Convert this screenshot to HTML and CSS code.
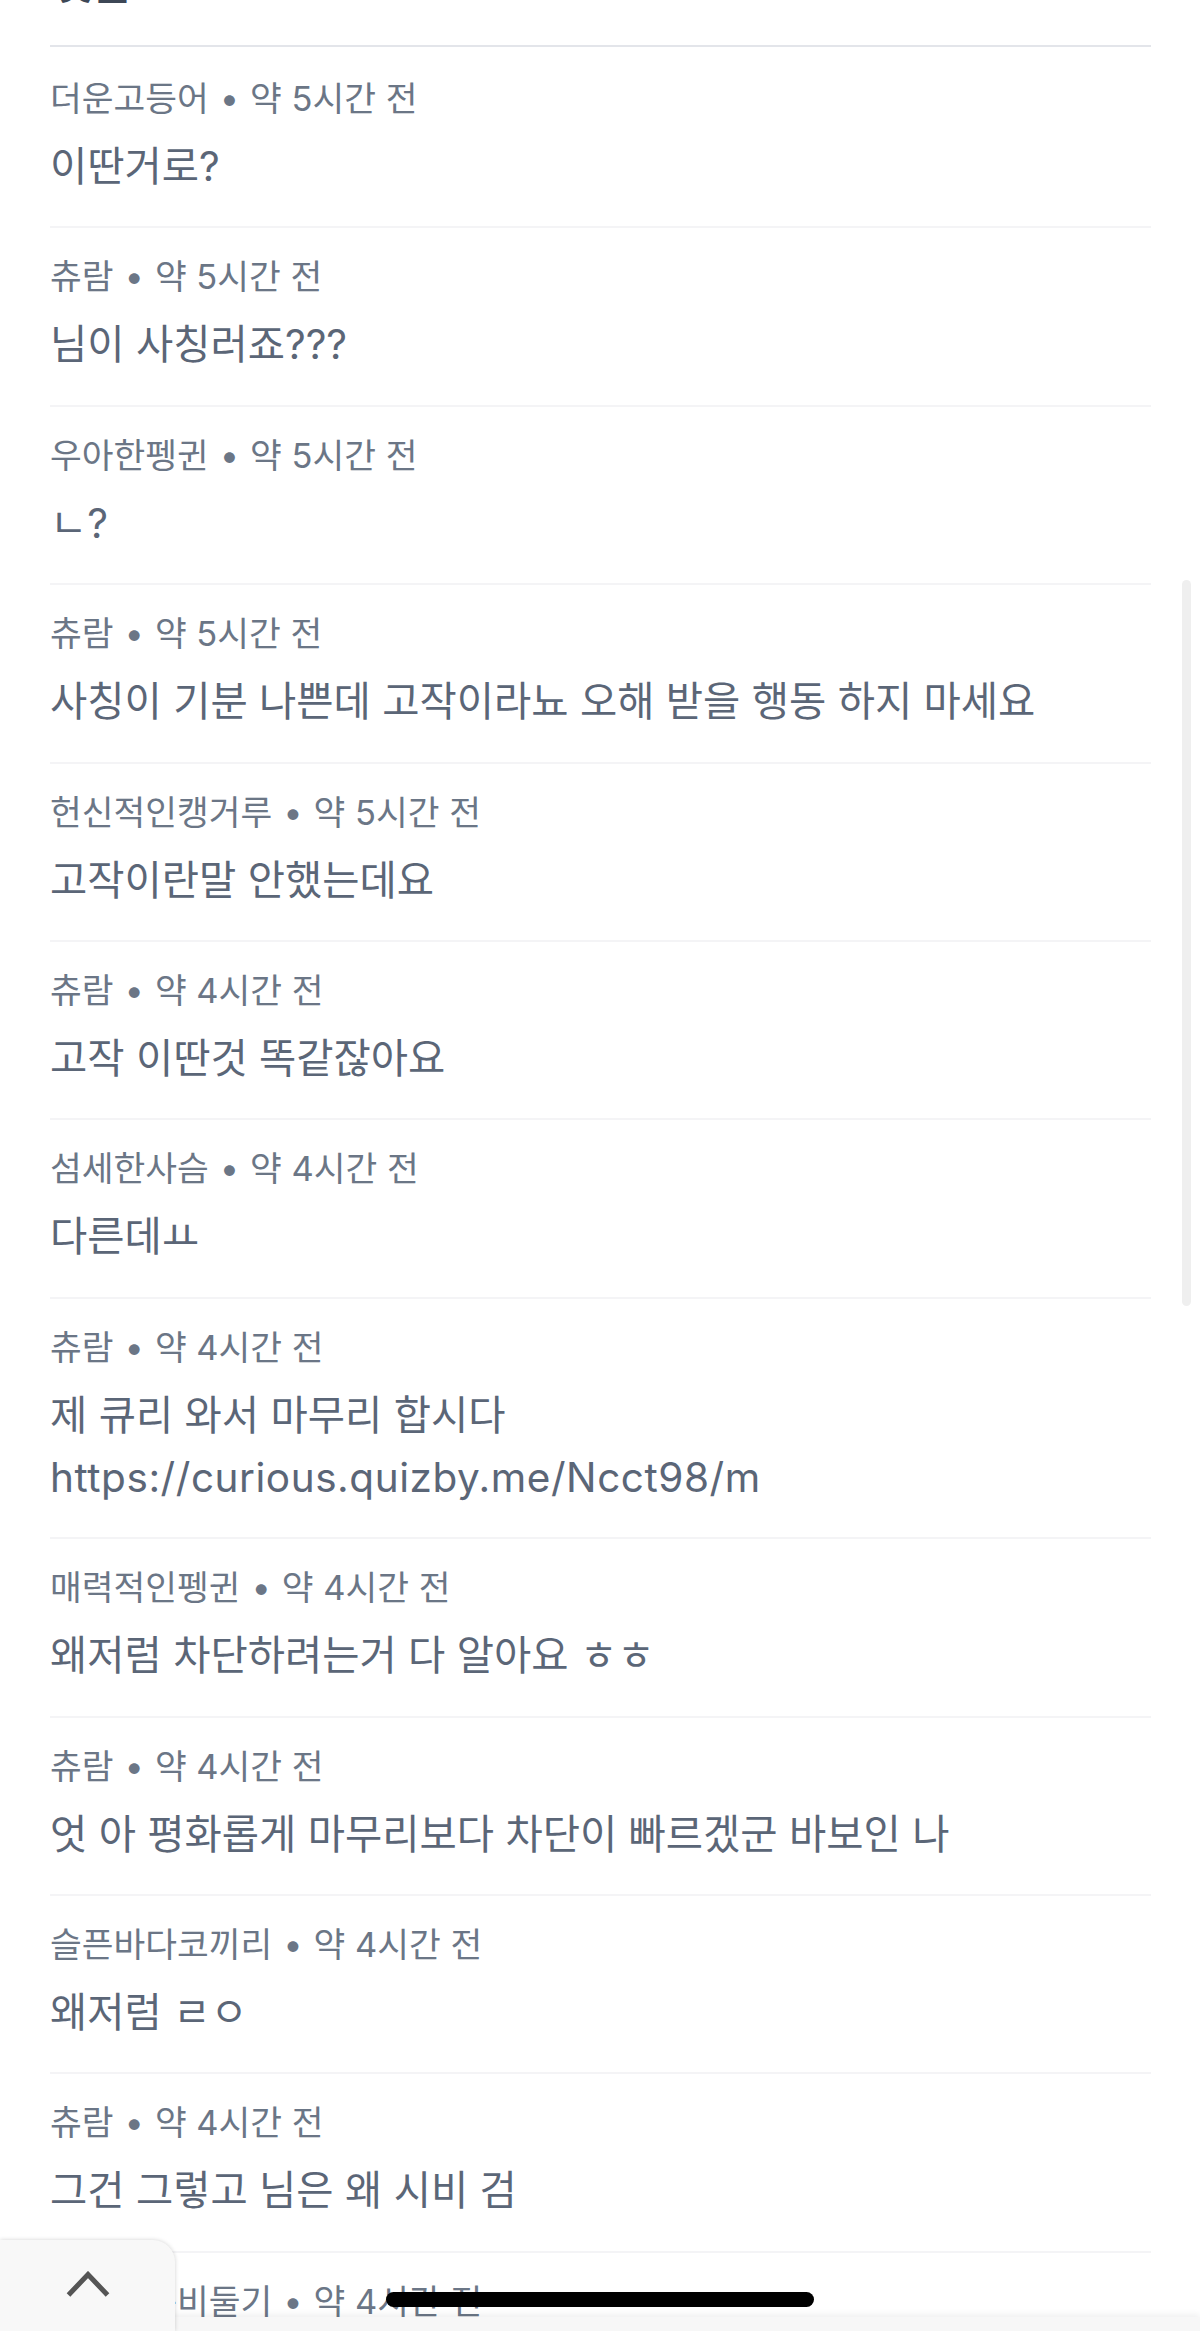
FILE: index.html
```html
<!DOCTYPE html>
<html lang="ko">
<head>
<meta charset="utf-8">
<title>댓글</title>
<link rel="stylesheet" href="styles.css">
</head>
<body>
<main class="page">
  <section class="comments">
    <h2 class="comments-title">댓글</h2>
    <ul class="comment-list">
      <li class="comment">
        <div class="comment-meta"><span class="author">더운고등어</span><span class="sep">•</span><span class="time">약 5시간 전</span></div>
        <p class="comment-body">이딴거로?</p>
      </li>
      <li class="comment">
        <div class="comment-meta"><span class="author">츄람</span><span class="sep">•</span><span class="time">약 5시간 전</span></div>
        <p class="comment-body">님이 사칭러죠???</p>
      </li>
      <li class="comment">
        <div class="comment-meta"><span class="author">우아한펭귄</span><span class="sep">•</span><span class="time">약 5시간 전</span></div>
        <p class="comment-body">ㄴ?</p>
      </li>
      <li class="comment">
        <div class="comment-meta"><span class="author">츄람</span><span class="sep">•</span><span class="time">약 5시간 전</span></div>
        <p class="comment-body">사칭이 기분 나쁜데 고작이라뇨 오해 받을 행동 하지 마세요</p>
      </li>
      <li class="comment">
        <div class="comment-meta"><span class="author">헌신적인캥거루</span><span class="sep">•</span><span class="time">약 5시간 전</span></div>
        <p class="comment-body">고작이란말 안했는데요</p>
      </li>
      <li class="comment">
        <div class="comment-meta"><span class="author">츄람</span><span class="sep">•</span><span class="time">약 4시간 전</span></div>
        <p class="comment-body">고작 이딴것 똑같잖아요</p>
      </li>
      <li class="comment">
        <div class="comment-meta"><span class="author">섬세한사슴</span><span class="sep">•</span><span class="time">약 4시간 전</span></div>
        <p class="comment-body">다른데ㅛ</p>
      </li>
      <li class="comment">
        <div class="comment-meta"><span class="author">츄람</span><span class="sep">•</span><span class="time">약 4시간 전</span></div>
        <p class="comment-body">제 큐리 와서 마무리 합시다<br><span class="link">https://curious.quizby.me/Ncct98/m</span></p>
      </li>
      <li class="comment">
        <div class="comment-meta"><span class="author">매력적인펭귄</span><span class="sep">•</span><span class="time">약 4시간 전</span></div>
        <p class="comment-body">왜저럼 차단하려는거 다 알아요 ㅎㅎ</p>
      </li>
      <li class="comment">
        <div class="comment-meta"><span class="author">츄람</span><span class="sep">•</span><span class="time">약 4시간 전</span></div>
        <p class="comment-body">엇 아 평화롭게 마무리보다 차단이 빠르겠군 바보인 나</p>
      </li>
      <li class="comment">
        <div class="comment-meta"><span class="author">슬픈바다코끼리</span><span class="sep">•</span><span class="time">약 4시간 전</span></div>
        <p class="comment-body">왜저럼 ㄹㅇ</p>
      </li>
      <li class="comment">
        <div class="comment-meta"><span class="author">츄람</span><span class="sep">•</span><span class="time">약 4시간 전</span></div>
        <p class="comment-body">그건 그렇고 님은 왜 시비 검</p>
      </li>
      <li class="comment">
        <div class="comment-meta"><span class="author">자유로운비둘기</span><span class="sep">•</span><span class="time">약 4시간 전</span></div>
      </li>
    </ul>
  </section>
</main>

<div class="scroll-thumb"></div>
<div class="bottom-bar"></div>
<button class="top-tab" type="button" aria-label="맨 위로">
  <svg class="chevron" width="44" height="26" viewBox="0 0 44 26" aria-hidden="true">
    <polyline points="2.5,24 22,3.5 41.5,24" fill="none" stroke="#555555" stroke-width="5" stroke-linejoin="miter"/>
  </svg>
</button>
<div class="home-indicator"></div>
</body>
</html>
```

FILE: styles.css
```css
html, body {
  margin: 0;
  padding: 0;
  height: 2331px;
  overflow: hidden;
  background: #ffffff;
}

body {
  font-family: Inter, "Noto Sans CJK KR", "Noto Sans", sans-serif;
}

.comments {
  margin: 0 49px 0 50px;
}

.comments-title {
  margin: -36px 0 0;
  padding: 0 0 41px 4px;
  font-size: 42px;
  line-height: 40px;
  font-weight: 700;
  color: #3d4756;
  border-bottom: 2px solid #e3e5ea;
}

.comment-list {
  list-style: none;
  margin: 0;
  padding: 3px 0 0;
}

.comment {
  padding: 26px 0 28.4px;
  border-bottom: 2px solid #f4f4f6;
}

.comment-meta {
  height: 46px;
  font-size: 34.5px;
  line-height: 46px;
  color: #6b7686;
  white-space: nowrap;
}

.sep {
  margin: 0 11px;
}

.comment-body {
  margin: 14px 0 0;
  font-size: 40.5px;
  line-height: 62px;
  color: #5b6677;
  white-space: nowrap;
}

.link {
  letter-spacing: 0.55px;
}

.scroll-thumb {
  position: fixed;
  top: 580px;
  right: 9px;
  width: 9px;
  height: 726px;
  border-radius: 5px;
  background: #efefef;
}

.bottom-bar {
  position: fixed;
  left: 0;
  right: 0;
  bottom: 0;
  height: 14px;
  background: #f7f7f7;
  box-shadow: 0 -3px 6px rgba(0, 0, 0, 0.06);
}

.top-tab {
  position: fixed;
  left: 0;
  bottom: 0;
  width: 175px;
  height: 91px;
  margin: 0;
  padding: 31px 0 0;
  border: none;
  border-radius: 0 22px 0 0;
  background: #f8f8f8;
  box-shadow: 0 0 4px rgba(0, 0, 0, 0.18);
  display: flex;
  justify-content: center;
  align-items: flex-start;
}

.chevron {
  display: block;
}

.home-indicator {
  position: fixed;
  left: 386px;
  top: 2292px;
  width: 428px;
  height: 15px;
  border-radius: 8px;
  background: #000000;
}
```
